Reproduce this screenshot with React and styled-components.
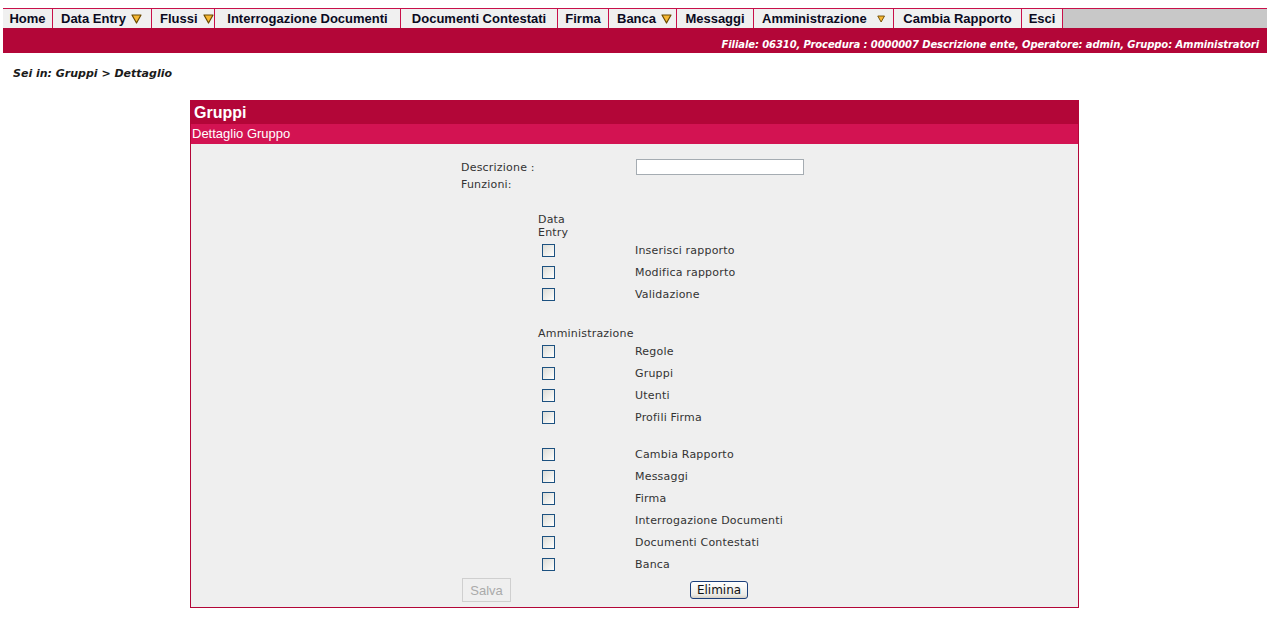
import styled, { createGlobalStyle } from "styled-components";

const Global = createGlobalStyle`
  body {
    margin: 0;
    background: #fff;
    font-family: "DejaVu Sans", Verdana, sans-serif;
  }
`;

const Menu = styled.div`
  display: flex;
  margin: 8px 0 0 3px;
  height: 19px;
  border-top: 1px solid #c8104a;
  background: #c8c8c8;
`;

const MenuItem = styled.div`
  width: ${(p) => p.w}px;
  flex: none;
  box-sizing: border-box;
  display: flex;
  align-items: center;
  justify-content: ${(p) => (p.arrow ? "flex-start" : "center")};
  padding-left: ${(p) => (p.arrow ? 8 : 0)}px;
  gap: 5px;
  background: #f0f0f0;
  border-right: 1px solid #c8104a;
  font: bold 13px "Liberation Sans", Arial, sans-serif;
  color: #0a0a1e;
  white-space: nowrap;
`;

const Spacer = styled.span`
  flex: 1;
`;

const InfoBar = styled.div`
  margin-left: 3px;
  height: 25px;
  background: #b30638;
  display: flex;
  justify-content: flex-end;
  align-items: flex-end;
  padding: 0 8px 3px 0;
  box-sizing: border-box;
  color: #fff;
  font: italic bold 10px "DejaVu Sans", Verdana, sans-serif;
  letter-spacing: -0.1px;
`;

const Crumb = styled.div`
  padding: 14px 0 0 13px;
  height: 33px;
  box-sizing: border-box;
  font: italic bold 11px "DejaVu Sans", Verdana, sans-serif;
  color: #1a1a1a;
`;

const Panel = styled.div`
  width: 889px;
  margin: 14px 0 0 190px;
  border: 1px solid #b30638;
  box-sizing: border-box;
  background: #efefef;
`;

const Title = styled.div`
  background: #b30638;
  height: 23px;
  padding-left: 3px;
  color: #fff;
  font: bold 16px "Liberation Sans", Arial, sans-serif;
  line-height: 24px;
`;

const SubTitle = styled.div`
  background: #d31352;
  height: 20px;
  padding-left: 1px;
  color: #fff;
  font: 13px "Liberation Sans", Arial, sans-serif;
  line-height: 20px;
`;

const Form = styled.div`
  padding: 14px 0 4px 270px;
  font: 11px "DejaVu Sans", Verdana, sans-serif;
  letter-spacing: 0.2px;
  color: #333;
`;

const Grid = styled.div`
  display: grid;
  grid-template-columns: 77px 97px 200px;
  align-items: center;
`;

const FieldLabel = styled.div`
  grid-column: 1 / span 2;
  height: ${(p) => p.h || 13}px;
  line-height: 13px;
  display: flex;
  align-items: center;
`;

const TextInput = styled.input`
  display: block;
  width: 168px;
  height: 16px;
  box-sizing: border-box;
  border: 1px solid #a5acb2;
  background: #fff;
  margin: -1px 0 0 1px;
  padding: 0;
`;

const GroupHead = styled.div`
  grid-column: 2 / span 2;
  margin-top: ${(p) => p.mt}px;
  line-height: 13px;
`;

const CheckCell = styled.div`
  grid-column: 2;
  height: 22px;
  display: flex;
  align-items: center;
  padding-left: 4px;
  margin-top: ${(p) => p.mt || 0}px;
`;

const Box = styled.span`
  width: 13px;
  height: 13px;
  box-sizing: border-box;
  border: 1px solid #1c5180;
  background: linear-gradient(135deg, #dcdcd7 0%, #f4f4f1 70%, #ffffff 100%);
`;

const CheckLabel = styled.div`
  grid-column: 3;
  height: 22px;
  line-height: 24px;
  margin-top: ${(p) => p.mt || 0}px;
`;

const Buttons = styled.div`
  display: flex;
  align-items: center;
  height: 26px;
  margin: 2px 0 0 1px;
`;

const SaveBtn = styled.button`
  width: 49px;
  height: 24px;
  border: 1px solid #cfcfcf;
  background: #efefef;
  color: #aaa;
  font: 13px "Liberation Sans", Arial, sans-serif;
  padding: 0;
`;

const DeleteBtn = styled.button`
  width: 58px;
  height: 18px;
  margin-left: 179px;
  border: 1px solid #1c3f7a;
  border-radius: 3px;
  background: linear-gradient(#ffffff, #ecebe6 80%, #d6d0c5);
  color: #111;
  font: 12px "DejaVu Sans", Verdana, sans-serif;
  padding: 0;
`;

function Arrow() {
  return (
    <svg width="11" height="10" viewBox="0 0 11 10">
      <polygon points="1,1 10,1 5.5,9" fill="#f7b733" stroke="#6b4a00" strokeWidth="1.2" strokeLinejoin="round" />
    </svg>
  );
}

const menu = [
  { label: "Home", w: 50 },
  { label: "Data Entry", w: 99, arrow: true },
  { label: "Flussi", w: 63, arrow: true },
  { label: "Interrogazione Documenti", w: 186 },
  { label: "Documenti Contestati", w: 157 },
  { label: "Firma", w: 51 },
  { label: "Banca", w: 68, arrow: true },
  { label: "Messaggi", w: 77 },
  { label: "Amministrazione", w: 140, arrow: true, spread: true },
  { label: "Cambia Rapporto", w: 128 },
  { label: "Esci", w: 41 },
];

const groups = [
  { head: ["Data", "Entry"], mt: 22, items: ["Inserisci rapporto", "Modifica rapporto", "Validazione"] },
  { head: ["Amministrazione"], mt: 22, items: ["Regole", "Gruppi", "Utenti", "Profili Firma"] },
  {
    head: null,
    mt: 15,
    items: ["Cambia Rapporto", "Messaggi", "Firma", "Interrogazione Documenti", "Documenti Contestati", "Banca"],
  },
];

export default function App() {
  return (
    <>
      <Global />
      <Menu>
        {menu.map((m) => (
          <MenuItem key={m.label} w={m.w} arrow={m.arrow}>
            {m.label}
            {m.spread && <Spacer />}
            {m.arrow && <Arrow />}
            {m.spread && <span style={{ width: 4 }} />}
          </MenuItem>
        ))}
      </Menu>
      <InfoBar>Filiale: 06310, Procedura : 0000007 Descrizione ente, Operatore: admin, Gruppo: Amministratori</InfoBar>
      <Crumb>Sei in: Gruppi &gt; Dettaglio</Crumb>
      <Panel>
        <Title>Gruppi</Title>
        <SubTitle>Dettaglio Gruppo</SubTitle>
        <Form>
          <Grid>
            <FieldLabel h={19}>Descrizione :</FieldLabel>
            <div>
              <TextInput type="text" />
            </div>
            <FieldLabel h={14}>Funzioni:</FieldLabel>
            <div />
            {groups.map((g, gi) =>
              [
                g.head ? (
                  <GroupHead key={"h" + gi} mt={g.mt}>
                    {g.head.map((l) => (
                      <div key={l}>{l}</div>
                    ))}
                  </GroupHead>
                ) : null,
                ...g.items.map((it, i) => {
                  const mt = !g.head && i === 0 ? g.mt : 0;
                  return [
                    <CheckCell key={"c" + it} mt={mt}>
                      <Box />
                    </CheckCell>,
                    <CheckLabel key={"l" + it} mt={mt}>
                      {it}
                    </CheckLabel>,
                  ];
                }),
              ]
            )}
          </Grid>
          <Buttons>
            <SaveBtn disabled>Salva</SaveBtn>
            <DeleteBtn>Elimina</DeleteBtn>
          </Buttons>
        </Form>
      </Panel>
    </>
  );
}
